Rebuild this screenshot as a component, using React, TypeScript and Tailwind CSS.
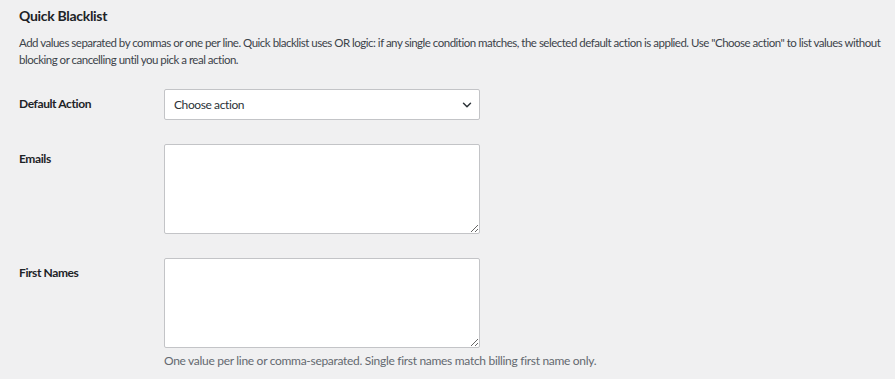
import { ChevronDown } from "lucide-react";

const font = { fontFamily: 'Lato, "Noto Sans", "Liberation Sans", sans-serif' };

function Row({ label, children }: { label: string; children: React.ReactNode }) {
  return (
    <div className="flex">
      <div className="w-[145px] shrink-0 pt-[5px] text-[12px] font-bold leading-[20px] tracking-[-0.4px] text-[#1d2327]">
        {label}
      </div>
      <div>{children}</div>
    </div>
  );
}

export default function App() {
  return (
    <div
      className="min-h-screen bg-[#f0f0f1] pl-[19px] pr-[8px] pt-[6px] text-[#3c434a]"
      style={font}
    >
      <h2 className="text-[14px] font-bold leading-[20px] tracking-[-0.3px] text-[#1d2327]">
        Quick Blacklist
      </h2>
      <p className="mt-[8px] text-[11.5px] leading-[17px] tracking-[-0.5px] text-[#3c434a]">
        Add values separated by commas or one per line. Quick blacklist uses OR logic: if any single
        condition matches, the selected default action is applied. Use "Choose action" to list values
        without blocking or cancelling until you pick a real action.
      </p>

      <div className="mt-[21px] flex flex-col gap-[24px]">
        <Row label="Default Action">
          <div className="relative w-[316px]">
            <select
              className="h-[31px] w-full appearance-none rounded-[2px] border border-[#c3c4c7] bg-white pl-[9px] pr-[28px] text-[12px] tracking-[-0.4px] text-[#2c3338] outline-none"
              style={font}
              defaultValue=""
            >
              <option value="">Choose action</option>
              <option value="block">Block order</option>
              <option value="cancel">Cancel order</option>
            </select>
            <ChevronDown
              className="pointer-events-none absolute right-[6px] top-[9px] text-[#2c3338]"
              size={14}
              strokeWidth={2.5}
            />
          </div>
        </Row>

        <Row label="Emails">
          <textarea
            className="block h-[90px] w-[316px] rounded-[2px] border border-[#c3c4c7] bg-white outline-none"
            style={font}
          />
        </Row>

        <Row label="First Names">
          <textarea
            className="block h-[90px] w-[316px] rounded-[2px] border border-[#c3c4c7] bg-white outline-none"
            style={font}
          />
          <p className="mt-[4px] whitespace-nowrap text-[12px] leading-[17px] tracking-[-0.3px] text-[#646970]">
            One value per line or comma-separated. Single first names match billing first name only.
          </p>
        </Row>
      </div>
    </div>
  );
}
